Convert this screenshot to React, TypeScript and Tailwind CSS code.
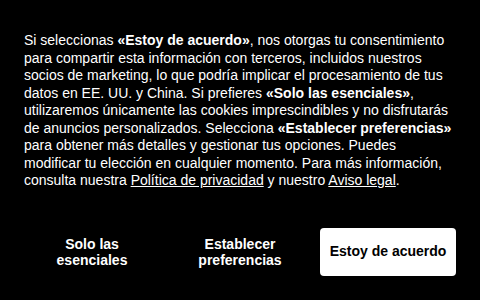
export default function App() {
  return (
    <div
      className="w-[480px] h-[300px] bg-black text-white flex flex-col px-6 pt-[32px]"
      style={{ fontFamily: '"Liberation Sans", Arial, sans-serif' }}
    >
      <p className="text-[14px] leading-[17.5px]">
        Si seleccionas <b>«Estoy de acuerdo»</b>, nos otorgas tu consentimiento para compartir esta
        información con terceros, incluidos nuestros socios de marketing, lo que podría implicar el
        procesamiento de tus datos en EE. UU. y China. Si prefieres <b>«Solo las esenciales»</b>,
        utilizaremos únicamente las cookies imprescindibles y no disfrutarás de anuncios
        personalizados. Selecciona <b>«Establecer preferencias»</b> para obtener más detalles y
        gestionar tus opciones. Puedes modificar tu elección en cualquier momento. Para más
        información, consulta nuestra <a className="underline">Política de privacidad</a> y nuestro{" "}
        <a className="underline">Aviso legal</a>.
      </p>
      <div className="grid grid-cols-3 gap-3 mt-[38px]">
        <button className="h-12 text-[14px] leading-4 font-bold text-white">
          Solo las
          <br />
          esenciales
        </button>
        <button className="h-12 text-[14px] leading-4 font-bold text-white">
          Establecer
          <br />
          preferencias
        </button>
        <button className="h-12 rounded bg-white text-[14px] font-bold text-black">
          Estoy de acuerdo
        </button>
      </div>
    </div>
  )
}
